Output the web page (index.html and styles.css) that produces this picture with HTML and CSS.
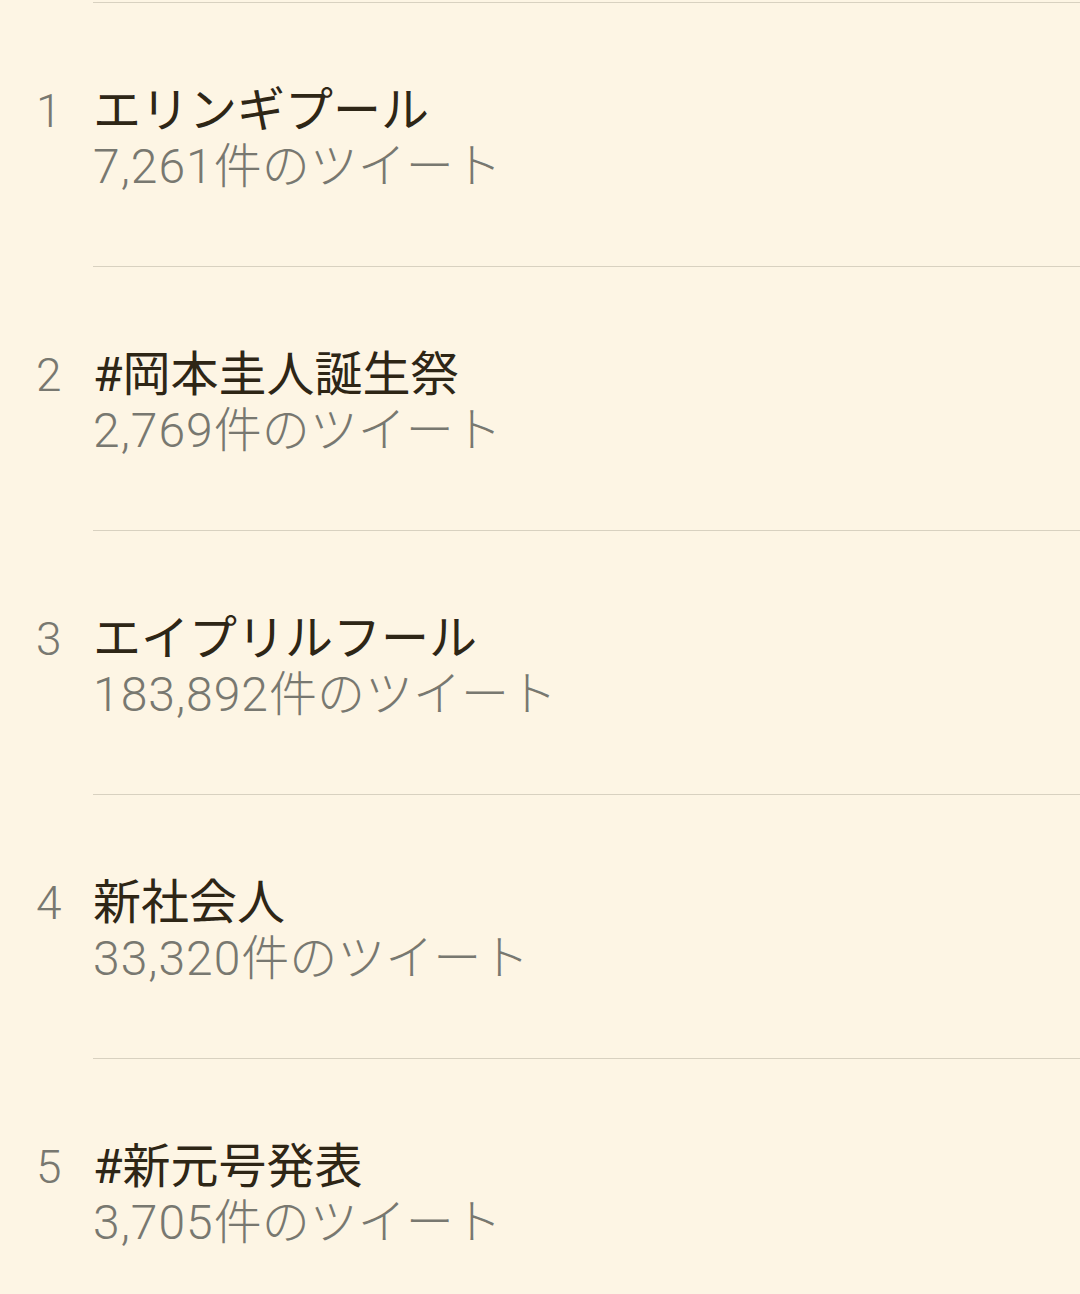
FILE: index.html
```html
<!DOCTYPE html>
<html lang="ja">
<head>
    <meta charset="UTF-8">
    <meta name="viewport" content="width=device-width, initial-scale=1.0">
    <title>トレンド</title>
    <link rel="stylesheet" href="styles.css">
</head>
<body>
    <div class="trends">
        <div class="trend">
            <div class="rank">1</div>
            <div class="info">
                <div class="name">エリンギプール</div>
                <div class="count"><span class="num">7,261</span>件のツイート</div>
            </div>
        </div>
        <div class="trend">
            <div class="rank">2</div>
            <div class="info">
                <div class="name">#岡本圭人誕生祭</div>
                <div class="count"><span class="num">2,769</span>件のツイート</div>
            </div>
        </div>
        <div class="trend">
            <div class="rank">3</div>
            <div class="info">
                <div class="name">エイプリルフール</div>
                <div class="count"><span class="num">183,892</span>件のツイート</div>
            </div>
        </div>
        <div class="trend">
            <div class="rank">4</div>
            <div class="info">
                <div class="name">新社会人</div>
                <div class="count"><span class="num">33,320</span>件のツイート</div>
            </div>
        </div>
        <div class="trend">
            <div class="rank">5</div>
            <div class="info">
                <div class="name">#新元号発表</div>
                <div class="count"><span class="num">3,705</span>件のツイート</div>
            </div>
        </div>
    </div>
</body>
</html>
```

FILE: styles.css
```css
body {
    margin: 0;
    background-color: #fdf5e4;
    font-family: 'Roboto', 'Noto Sans CJK JP', sans-serif;
}
.trends {
    padding-top: 2px;
}
.trend {
    display: flex;
    height: 264px;
}
.rank {
    width: 93px;
    padding-left: 36px;
    box-sizing: border-box;
    padding-top: 81px;
    font-size: 46px;
    font-weight: 300;
    line-height: 56px;
    color: #787870;
}
.info {
    flex: 1;
    border-top: 1px solid #d8d1c0;
    padding-top: 80px;
}
.name {
    font-size: 48px;
    line-height: 56px;
    color: #2e2616;
}
.count {
    font-size: 48px;
    line-height: 56px;
    font-weight: 300;
    color: #787870;
}
.num {
    letter-spacing: 1px;
}
```
